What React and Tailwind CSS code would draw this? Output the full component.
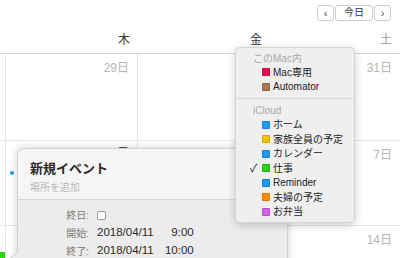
import React from 'react';

const font = { fontFamily: '"Liberation Sans", "Noto Sans CJK JP", sans-serif' };

const macItems = [
  { label: 'Mac専用', color: 'bg-[#ec0a4f]' },
  { label: 'Automator', color: 'bg-[#a67c4c]' },
];

const icloudItems = [
  { label: 'ホーム', color: 'bg-[#1a9bf0]' },
  { label: '家族全員の予定', color: 'bg-[#f6c400]' },
  { label: 'カレンダー', color: 'bg-[#1a9bf0]' },
  { label: '仕事', color: 'bg-[#2bd40f]', checked: true },
  { label: 'Reminder', color: 'bg-[#1a9bf0]' },
  { label: '夫婦の予定', color: 'bg-[#ff8c00]' },
  { label: 'お弁当', color: 'bg-[#d660e8]' },
];

function MenuItem({ item }) {
  return (
    <div className="flex items-center h-[14.5px] text-[10px] text-[#222]">
      <span className="w-[26px] shrink-0 pl-[14px] text-[11px] leading-none">{item.checked ? '✓' : ''}</span>
      <span className={`w-[8px] h-[8px] rounded-[1px] shrink-0 mr-[3px] border border-black/15 ${item.color}`} />
      <span>{item.label}</span>
    </div>
  );
}

function DateCell({ label, className = '' }) {
  return (
    <div className={`border-r border-[#e6e6e6] flex justify-end pr-[8px] pt-[8px] ${className}`}>
      {label && <span className="text-[12px] text-[#b4b4b4] leading-none">{label}</span>}
    </div>
  );
}

export default function App() {
  const cols = 'grid grid-cols-[6px_132px_132px_130px]';
  return (
    <div className="relative w-[400px] h-[258px] overflow-hidden bg-white" style={font}>
      {/* toolbar */}
      <div className="h-[26px] flex justify-end items-start pt-[5px] pr-[9px] gap-[1px]">
        <button className="w-[17px] h-[16px] rounded-[3px] border border-[#cdcdcd] bg-white text-[11px] leading-none text-[#444] flex items-center justify-center">‹</button>
        <button className="w-[38px] h-[16px] rounded-[3px] border border-[#cdcdcd] bg-white text-[10px] leading-none text-[#333] flex items-center justify-center">今日</button>
        <button className="w-[17px] h-[16px] rounded-[3px] border border-[#cdcdcd] bg-white text-[11px] leading-none text-[#444] flex items-center justify-center">›</button>
      </div>

      {/* day header */}
      <div className={`${cols} h-[28px] border-b border-[#d6d6d6]`}>
        <div />
        <div className="flex justify-end items-center pr-[8px] text-[12px] text-[#333]">木</div>
        <div className="flex justify-end items-center pr-[8px] text-[12px] text-[#333]">金</div>
        <div className="flex justify-end items-center pr-[8px] text-[12px] text-[#9a9a9a]">土</div>
      </div>

      {/* weeks */}
      <div className={`${cols} h-[87px] border-b border-[#e6e6e6]`}>
        <div className="border-r border-[#e6e6e6]" />
        <DateCell label="29日" />
        <DateCell />
        <DateCell label="31日" className="border-r-0" />
      </div>
      <div className={`${cols} h-[85px] border-b border-[#e6e6e6]`}>
        <div className="border-r border-[#e6e6e6]" />
        <div className="border-r border-[#e6e6e6] flex flex-col">
          <div className="flex justify-end pr-[8px] pt-[6px]">
            <span className="text-[12px] text-[#555] leading-none">5日</span>
          </div>
          <div className="mt-[12px] ml-[4px] w-[4px] h-[4px] rounded-full bg-[#1a9bf0]" />
        </div>
        <DateCell />
        <DateCell label="7日" className="border-r-0" />
      </div>
      <div className={`${cols} h-[40px]`}>
        <div className="border-r border-[#e6e6e6] flex items-end">
          <div className="w-[5px] h-[6px] bg-[#2bd40f] mb-[8px]" />
        </div>
        <DateCell />
        <DateCell />
        <DateCell label="14日" className="border-r-0" />
      </div>

      {/* new event popover */}
      <div className="absolute left-[17px] top-[148px] w-[271px] h-[120px] rounded-t-[6px] border border-[#d2d2d2] bg-[#ececec] shadow-[0_0_8px_rgba(0,0,0,0.18)]">
        <div className="absolute -left-[6px] top-[104px] w-[11px] h-[11px] rotate-45 bg-[#ececec] border-l border-b border-[#d2d2d2]" />
        <div className="relative h-[51px] rounded-t-[6px] bg-[#f5f5f5] border-b border-[#d8d8d8] pl-[12px] pt-[13px]">
          <div className="text-[13px] font-bold text-[#2a2a2a] leading-none">新規イベント</div>
          <div className="mt-[8px] text-[10px] text-[#b8b8b8] leading-none">場所を追加</div>
        </div>
        <div className="relative pt-[9px] flex flex-col gap-[6px]">
          <div className="flex items-center h-[12px]">
            <span className="w-[71px] text-right text-[10px] text-[#7a7a7a]">終日:</span>
            <span className="ml-[8px] w-[9px] h-[9px] rounded-[2px] border border-[#9a9a9a] bg-white" />
          </div>
          <div className="flex items-center h-[12px]">
            <span className="w-[71px] text-right text-[10px] text-[#7a7a7a]">開始:</span>
            <span className="ml-[8px] text-[11.5px] text-[#2a2a2a]">2018/04/11</span>
            <span className="w-[40px] text-right text-[11.5px] text-[#2a2a2a]">9:00</span>
          </div>
          <div className="flex items-center h-[12px]">
            <span className="w-[71px] text-right text-[10px] text-[#7a7a7a]">終了:</span>
            <span className="ml-[8px] text-[11.5px] text-[#2a2a2a]">2018/04/11</span>
            <span className="w-[40px] text-right text-[11.5px] text-[#2a2a2a]">10:00</span>
          </div>
        </div>
      </div>

      {/* calendar menu */}
      <div className="absolute left-[235px] top-[47px] w-[120px] rounded-[5px] bg-[#efefef] border border-[#d4d4d4] shadow-[0_2px_8px_rgba(0,0,0,0.2)] pt-[3px] pb-[3px]">
        <div className="h-[14px] flex items-center pl-[17px] text-[10px] text-[#a9a9a9]">このMac内</div>
        {macItems.map((item) => (
          <MenuItem key={item.label} item={item} />
        ))}
        <div className="h-[9.5px] flex items-center">
          <div className="flex-1 h-px bg-[#d9d9d9]" />
        </div>
        <div className="h-[14px] flex items-center pl-[17px] text-[10px] text-[#a9a9a9]">iCloud</div>
        {icloudItems.map((item) => (
          <MenuItem key={item.label} item={item} />
        ))}
      </div>
    </div>
  );
}
